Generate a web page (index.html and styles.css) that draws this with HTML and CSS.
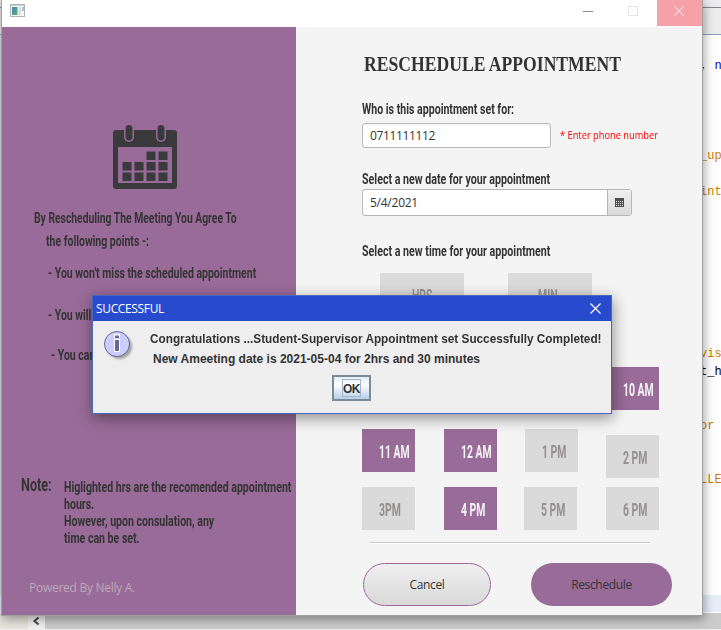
FILE: index.html
```
<!DOCTYPE html>
<html lang="en">
<head>
<meta charset="utf-8">
<title>Reschedule Appointment</title>
<link rel="stylesheet" href="styles.css">
</head>
<body>
<div class="desktop">
  <div class="ide">
    <div class="ide-bar"></div>
    <div class="ide-tabs"></div>
    <pre class="code"><span class="k">, </span><span class="b">n</span>




_up

int








vis
<span class="k">t_h</span>


or


LLE</pre>
    <div class="current-line"></div>
    <div class="scroll">
      <span class="scroll-gap"></span>
      <span class="scroll-arrow"><svg width="8" height="8" viewBox="0 0 8 8"><path d="M5.500 .5 1.500 4l4 3.500" fill="none" stroke="#444" stroke-width="2"/></svg></span>
      <span class="scroll-thumb"></span>
    </div>
  </div>

  <div class="window">
    <div class="titlebar">
      <svg class="app-icon" width="16" height="14" viewBox="0 0 16 14">
        <defs><linearGradient id="app" x1="0" y1="0" x2="1" y2="1"><stop offset="0" stop-color="#4f82b4"/><stop offset="1" stop-color="#58b072"/></linearGradient></defs>
        <rect x=".5" y=".5" width="14" height="12" fill="#f5f5f5" stroke="#aeb4b8"/>
        <path d="M1 1.500h13" stroke="#c9cdd0"/>
        <rect x="2" y="3" width="5.500" height="8" fill="url(#app)"/>
        <rect x="8.500" y="3" width="2.500" height="8" fill="#dcdcdc"/>
        <rect x="12" y="3" width="2" height="4" fill="#9fcbd0"/>
      </svg>
      <span class="win-btn"><svg width="10" height="10" viewBox="0 0 10 10"><path d="M0 5.500h10" stroke="#8c8c8c"/></svg></span>
      <span class="win-btn"><svg width="10" height="10" viewBox="0 0 10 10"><rect x=".5" y=".5" width="9" height="9" fill="none" stroke="#e3e3e3"/></svg></span>
      <span class="win-btn close"><svg width="10" height="10" viewBox="0 0 10 10"><path d="M0 0l10 10M10 0 0 10" stroke="#fbd5d8" stroke-width="1.100"/></svg></span>
    </div>
    <div class="content">
      <aside class="side">
        <svg class="calendar" width="66" height="66" viewBox="0 0 66 66">
          <path fill="#3a3a3c" fill-rule="evenodd" d="M4 5h58q3 0 3 3v53q0 3-3 3H4q-3 0-3-3V8q0-3 3-3zM6 22v36h54V22z"/>
          <g fill="#3a3a3c" stroke="#996b98" stroke-width="1.500"><rect x="12.800" y="-.7" width="8.400" height="17" rx="4.200"/><rect x="44.800" y="-.7" width="8.400" height="17" rx="4.200"/></g>
          <path fill="#3a3a3c" d="M34.500 26.500h9v8.500h-9zM46.500 26.500h9v8.500h-9zM10.500 37h9v8.500h-9zM22.500 37h9v8.500h-9zM34.500 37h9v8.500h-9zM46.500 37h9v8.500h-9zM10.500 47.500h9V56h-9zM22.500 47.500h9V56h-9zM34.500 47.500h9V56h-9zM46.500 47.500h9V56h-9z"/>
        </svg>
        <p class="narrow agree">By Rescheduling The Meeting You Agree To</p>
        <p class="narrow following">the following points -:</p>
        <p class="narrow point">- You won't miss the scheduled appointment</p>
        <p class="narrow point second">- You will</p>
        <p class="narrow point third">- You can</p>
        <div class="note">
          <p class="narrow note-title">Note:</p>
          <p class="narrow note-text">Higlighted hrs are the recomended appointment<br>hours.<br>However, upon consulation, any<br>time can be set.</p>
        </div>
        <p class="powered">Powered By Nelly A.</p>
      </aside>
      <main class="form">
        <h1>RESCHEDULE APPOINTMENT</h1>
        <p class="narrow label">Who is this appointment set for:</p>
        <div class="phone-row">
          <div class="input">0711111112</div>
          <span class="hint">* Enter phone number</span>
        </div>
        <p class="narrow label date-label">Select a new date for your appointment</p>
        <div class="date">
          <div class="date-value">5/4/2021</div>
          <div class="date-btn"><svg width="9" height="9" viewBox="0 0 9 9"><path d="M0 0h9v9H0z" fill="#4d4d4d"/><path d="M1 3.500h8M1 5.500h8M1 7.500h8" stroke="#eee" stroke-dasharray="1 1"/></svg></div>
        </div>
        <p class="narrow label time-label">Select a new time for your appointment</p>
        <div class="units">
          <div class="unit"><span>HRS</span></div>
          <div class="unit"><span>MIN</span></div>
        </div>
        <div class="hours">
          <div class="hour on last"><span>10 AM</span></div>
          <div class="hour on"><span>11 AM</span></div>
          <div class="hour on"><span>12 AM</span></div>
          <div class="hour"><span>1 PM</span></div>
          <div class="hour low"><span>2 PM</span></div>
          <div class="hour"><span>3PM</span></div>
          <div class="hour on"><span>4 PM</span></div>
          <div class="hour early"><span>5 PM</span></div>
          <div class="hour"><span>6 PM</span></div>
        </div>
        <div class="rule"></div>
        <div class="actions">
          <div class="btn cancel">Cancel</div>
          <div class="btn go">Reschedule</div>
        </div>
      </main>
    </div>
  </div>

  <div class="dialog">
    <div class="dialog-title"><span>SUCCESSFUL</span>
      <svg width="11" height="11" viewBox="0 0 11 11"><path d="M.5.5l10 10M10.500.5l-10 10" stroke="#fff" stroke-width="1.200"/></svg>
    </div>
    <div class="dialog-body">
      <svg class="info" width="32" height="32" viewBox="0 0 32 32">
        <defs><filter id="soft" x="-20%" y="-20%" width="150%" height="150%"><feGaussianBlur stdDeviation="1.300"/></filter></defs>
        <circle cx="16.500" cy="16.500" r="12.500" fill="#888" opacity=".75" filter="url(#soft)"/>
        <circle cx="14" cy="14" r="12.500" fill="#ccf" stroke="#669"/>
        <path d="M11 4h6v4h-6zM11 9h6v13h-6z" fill="#fff"/>
        <path d="M12 5.500h4v2.500h-4zM12 10h4v11h-4z" fill="#669"/>
      </svg>
      <div class="message">
        <p class="msg-one">Congratulations ...Student-Supervisor Appointment set Successfully Completed!</p>
        <p class="msg-two">New Ameeting date is 2021-05-04 for 2hrs and 30 minutes</p>
      </div>
    </div>
    <div class="ok"><span>OK</span></div>
  </div>
</div>
</body>
</html>
```
FILE: styles.css
```
* { box-sizing: border-box; }
body { margin: 0; overflow: hidden; font-family: "Open Sans", sans-serif; color: #333; }
p, h1, pre { margin: 0; }
svg { display: block; flex: none; }

.desktop { position: relative; width: 721px; height: 630px; overflow: hidden; background: #fff; }

/* Editor behind the window */
.ide { display: flex; flex-direction: column; height: 630px; background: linear-gradient(90deg, #dfe3dc 2px, #fff 2px); }
.ide-bar { height: 8px; background: #ececec; border-bottom: 1px solid #85858d; }
.ide-tabs { height: 27px; background: #ededed; border-bottom: 1px solid #83a2bd; }
.code { height: 560px; padding: 22px 0 0 700px; font: 12px/18px "Liberation Mono", monospace; color: #ce7b00; overflow: hidden; }
.code .k { color: #000; }
.code .b { color: #00c; }
.current-line { height: 18px; border-bottom: 1px solid #fff; background: #e6edf8; }
.scroll { display: flex; height: 17px; border-bottom: 1px solid #f0f0f0; }
.scroll-gap { width: 28px; background: #e6e4dc; }
.scroll-arrow { display: flex; align-items: center; justify-content: center; width: 17px; background: #f0f0f0; }
.scroll-thumb { flex: 1; background: #cbcbcb; }

/* Application window */
.window { position: absolute; left: 2px; top: 0; width: 700px; height: 615px; background: #f4f4f4; box-shadow: 0 0 0 1px #a0a0a0, 1px 3px 10px 1px rgba(0,0,0,.38); }
.titlebar { display: flex; justify-content: flex-end; height: 27px; background: #fff; }
.app-icon { margin: 4px auto 0 8px; }
.win-btn { display: flex; align-items: center; justify-content: center; width: 45px; height: 22px; padding-right: 4px; }
.win-btn.close { height: 26px; padding: 0 1px 4px 0; background: #f6a1a8; }
.content { display: flex; height: 588px; }

.narrow { font: 700 15px/20px Roboto, sans-serif; white-space: nowrap; transform: scaleX(.7); transform-origin: 0 50%; }

.side { width: 294px; padding-top: 98px; background: #996b98; color: #333; overflow: hidden; }
.calendar { margin-left: 110px; }
.agree { margin: 17px 0 0 32px; transform: scaleX(.69); }
.following { margin: 3px 0 0 44px; }
.point { margin: 12px 0 0 46px; }
.point.second { margin-top: 22px; }
.point.third { margin: 20px 0 0 49px; }
.note { display: flex; margin-top: 111px; }
.note-title { flex: none; width: 43px; margin: -1px 0 0 19px; font-size: 18px; }
.note-text { line-height: 17px; margin-top: 3px; transform: scaleX(.705); }
.powered { margin: 33px 0 0 27px; font-size: 12px; letter-spacing: -.27px; line-height: 16px; color: #bba9b9; }

.form { width: 406px; padding: 25px 0 0 66px; }
h1 { margin-left: 2px; font: 700 21px/24px "Liberation Serif", serif; white-space: nowrap; transform: scaleX(.839); transform-origin: 0 50%; }
.label { margin-top: 23px; transform: scaleX(.706); }
.phone-row { display: flex; align-items: center; margin-top: 4px; }
.input { width: 189px; height: 25px; padding-left: 7px; border: 1px solid #bababa; border-radius: 3px; background: linear-gradient(#f3f3f3, #fff 3px); font-size: 12px; letter-spacing: -.35px; line-height: 23px; }
.hint { margin-left: 9px; padding-bottom: 1px; font-size: 10px; line-height: 16px; color: #f00; white-space: nowrap; transform: scaleX(.928); transform-origin: 0 50%; }
.date-label { margin-top: 21px; transform: scaleX(.711); }
.date { display: flex; width: 270px; height: 27px; border: 1px solid #b5b5b5; border-radius: 3px; background: #fff; font-size: 12px; letter-spacing: -.25px; line-height: 25px; }
.date-value { flex: 1; padding-left: 7px; }
.date-btn { display: flex; align-items: center; justify-content: center; width: 24px; border-left: 1px solid #b5b5b5; background: linear-gradient(#f0f0f0, #d9d9d9); }
.time-label { margin-top: 25px; transform: scaleX(.711); }

.units { display: flex; gap: 44px; margin: 12px 0 0 18px; }
.unit { width: 84px; height: 43px; padding: 3px 0 0 32px; background: #dadada; color: #949090; font: 700 18px/39px Roboto, sans-serif; }
.unit + .unit { padding-left: 30px; }
.unit span, .hour span { display: block; transform: scaleX(.58); transform-origin: 0 50%; white-space: nowrap; }
.hours { display: grid; grid-template-columns: 82px 81px 81px 53px; grid-template-rows: 45px 41px 43px; row-gap: 17px; height: 163px; margin-top: 51px; }
.hour { width: 53px; height: 43px; padding: 3px 0 0 17px; background: #dadada; color: #949090; font: 700 18px/40px Roboto, sans-serif; }
.hour.on { background: #996b98; color: #f4f4f4; }
.hour.last { grid-column: 4; }
.hour.low { margin-top: 6px; }
.hour.early { margin-left: -1px; }
.rule { width: 280px; margin: 12px 0 0 8px; border-top: 1px solid #c9c9c9; border-bottom: 1px solid #fff; }
.actions { display: flex; gap: 40px; margin: 19px 0 0 1px; }
.btn { display: flex; align-items: center; justify-content: center; height: 43px; border-radius: 22px; font-size: 12px; letter-spacing: -.35px; }
.cancel { width: 128px; border: 1px solid #996b98; background: linear-gradient(#efefef, #d9d9d9); }
.go { width: 141px; background: #996b98; }

/* Message dialog */
.dialog { position: absolute; left: 92px; top: 295px; width: 520px; height: 119px; border: 1px solid #4a67bd; background: #eee; box-shadow: 1px 4px 14px rgba(0,0,0,.42); }
.dialog-title { display: flex; justify-content: space-between; align-items: center; height: 25px; padding: 0 10px 1px 3px; background: #284acd; color: #fff; font-size: 12px; letter-spacing: -.35px; }
.dialog-body { display: flex; margin-left: 10px; }
.info { margin-top: 9px; }
.message { margin: 9px 0 0 15px; font: 700 12px/19px "Liberation Sans", sans-serif; white-space: nowrap; }
.msg-one { width: 452px; transform: scaleX(.981); transform-origin: 0 50%; }
.msg-two { margin-top: 1px; padding-left: 3px; }
.ok { display: flex; align-items: center; justify-content: center; width: 39px; height: 26px; margin: 6px 0 0 239px; border: 2px solid #7a8a99; background: linear-gradient(#e2ebf3, #fff 35%, #b8cfe5); font: 700 12px/18px "Liberation Sans", sans-serif; }
.ok span { width: 19px; height: 18px; border: 1px solid #a3b8cc; text-align: center; letter-spacing: -.5px; }
```
